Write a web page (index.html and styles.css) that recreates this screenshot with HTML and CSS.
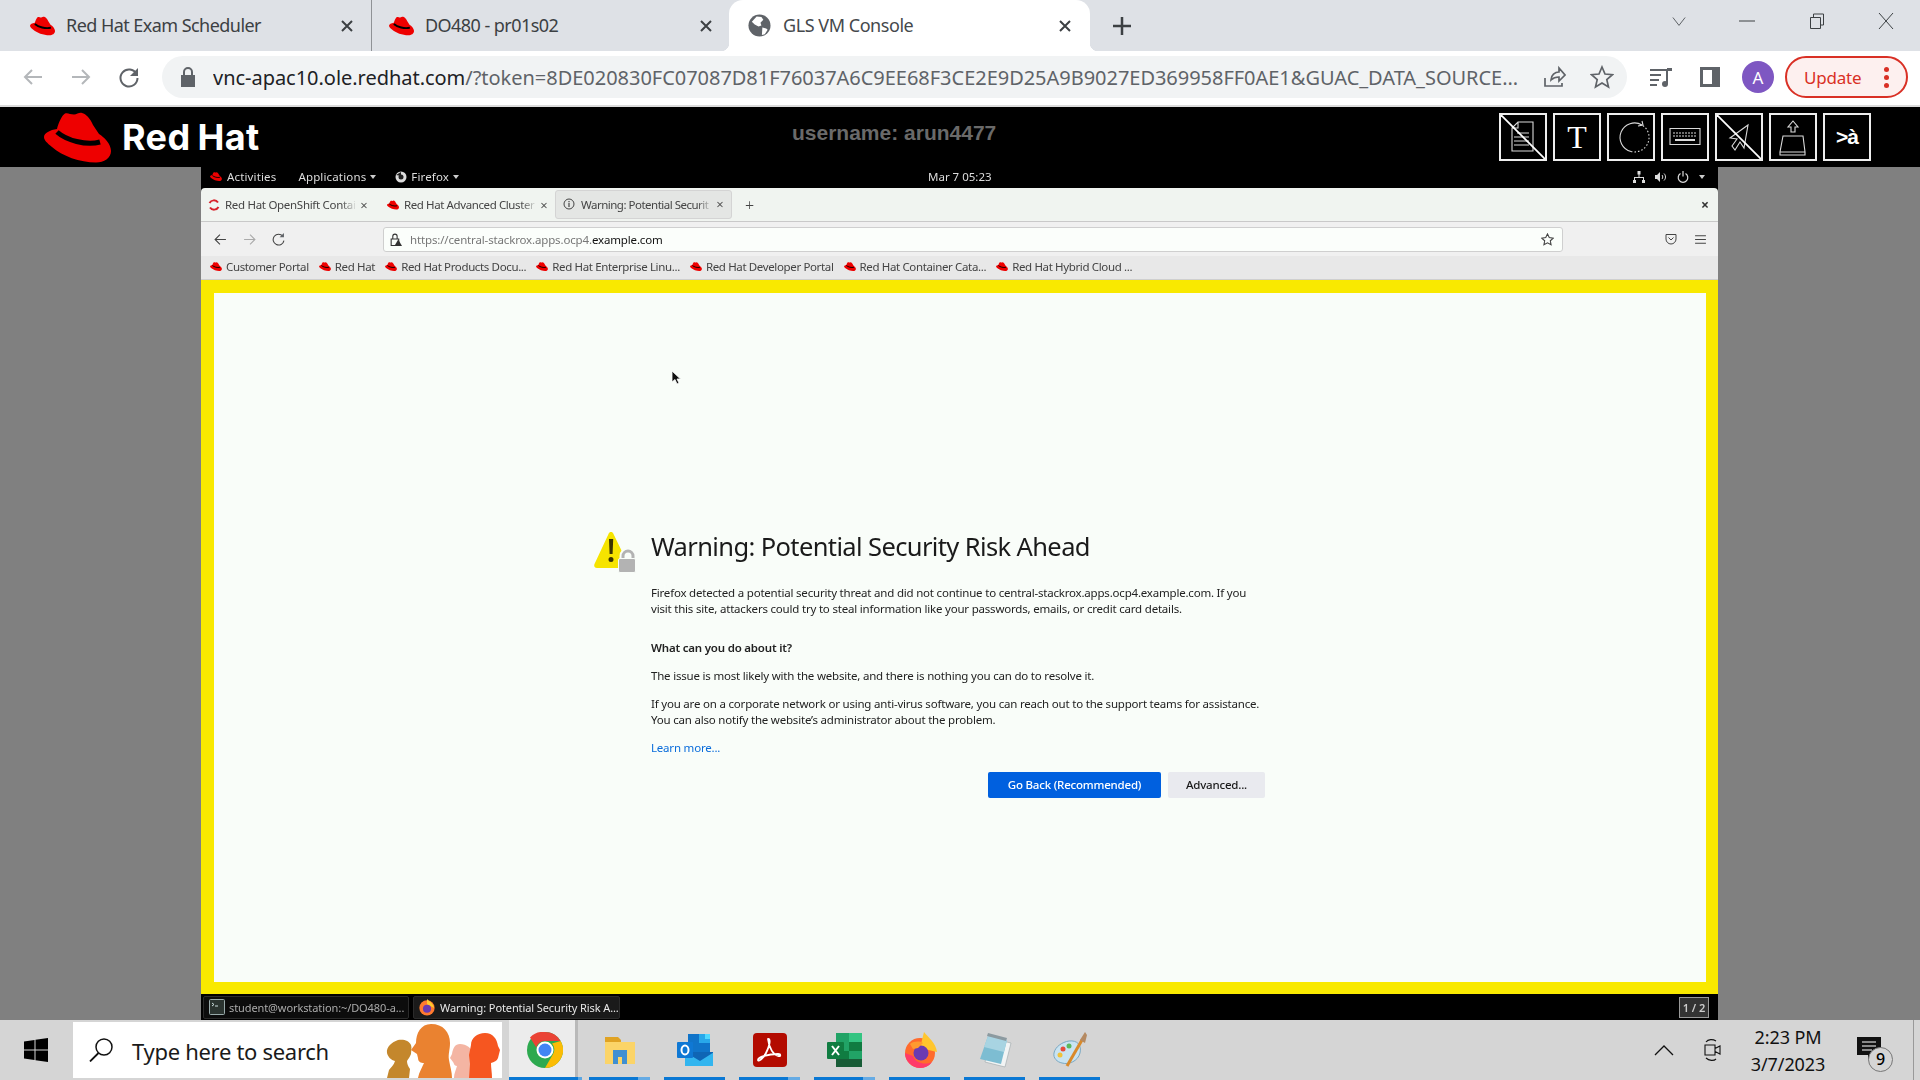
FILE: index.html
```html
<!DOCTYPE html>
<html lang="en">
<head>
<meta charset="utf-8">
<title>GLS VM Console</title>
<link rel="stylesheet" href="styles.css">
</head>
<body>
<svg class="sprite" width="0" height="0" aria-hidden="true">
  <symbol id="hat" viewBox="0 0 67 51">
    <path fill="#ee0000" d="M21 1.5C24 .5 26 2.5 30 2.5 33 2.5 35 .3 38 1 42 2 46 6 49 13L55 22C60 25 67 32 67 39 67 46 60 50.5 52 50.5 36 50.5 18 44 8 35 3 31 0 28 0 25 0 21 6 18 13 17 14 12 18 3 21 1.5Z"/>
    <path fill="none" stroke="#000" stroke-width="5" d="M13 20C22 28 42 34 56 30"/>
  </symbol>
</svg>

<header class="chrome-tabs">
  <div class="ctab ctab-a"><svg class="chat"><use href="#hat"/></svg><span class="ctitle">Red Hat Exam Scheduler</span><svg class="cclose" viewBox="0 0 16 16"><path d="M3 3l10 10M13 3L3 13"/></svg></div>
  <div class="ctab ctab-b"><svg class="chat"><use href="#hat"/></svg><span class="ctitle">DO480 - pr01s02</span><svg class="cclose" viewBox="0 0 16 16"><path d="M3 3l10 10M13 3L3 13"/></svg></div>
  <div class="ctab ctab-c"><svg class="cglobe" viewBox="0 0 24 24"><circle cx="12" cy="12" r="11.5" fill="#5f6368"/><path fill="#fff" d="M9 2.500l5 .5 2 3-3 3 1 3-3 1-4-2-3-3zM15 14l4 1 1.500 1.500-3 4.500-3 1z"/></svg><span class="ctitle">GLS VM Console</span><svg class="cclose" viewBox="0 0 16 16"><path d="M3 3l10 10M13 3L3 13"/></svg></div>
  <svg class="cplus" viewBox="0 0 18 18"><path d="M9 0v18M0 9h18"/></svg>
  <div class="win-controls">
    <svg class="wc wc-down" viewBox="0 0 16 16"><path d="M1 4l7 9 7-9"/></svg>
    <svg class="wc wc-min" viewBox="0 0 16 16"><path d="M0 8h16"/></svg>
    <svg class="wc wc-max" viewBox="0 0 16 16"><path d="M1.500 4.500h10v11h-10zM4.500 4.500V1h10v11h-3"/></svg>
    <svg class="wc wc-x" viewBox="0 0 16 16"><path d="M1 0l14 16M15 0L1 16"/></svg>
  </div>
</header>

<nav class="chrome-bar">
  <svg class="nav nav-off" viewBox="0 0 24 24"><path d="M21 12H4M11 5l-7 7 7 7"/></svg>
  <svg class="nav nav-off" viewBox="0 0 24 24"><path d="M3 12h17M13 5l7 7-7 7"/></svg>
  <svg class="nav" viewBox="0 0 24 24"><path d="M19.500 9A8.500 8.500 0 1 0 20.500 13"/><path class="solid" d="M21 3v8h-8z"/></svg>
  <div class="omnibox">
    <svg class="lock" viewBox="0 0 16 20"><path class="solid" d="M1 8h14v12H1z"/><path d="M4 8V5a4 4 0 0 1 8 0v3"/></svg>
    <div class="url"><b>vnc-apac10.ole.redhat.com</b>/?token=8DE020830FC07087D81F76037A6C9EE68F3CE2E9D25A9B9027ED369958FF0AE1&amp;GUAC_DATA_SOURCE...</div>
    <svg class="nav" viewBox="0 0 24 24"><path d="M3 13v8h17v-3M9 15c0-5 4-8 8-8V3l6 7-6 6v-4c-3 0-6 1-8 3z"/></svg>
    <svg class="nav" viewBox="0 0 24 24"><path d="M12 2l3 7 7.500.700-5.700 4.900 1.700 7.400L12 18l-6.500 4 1.700-7.400L1.500 9.700 9 9z"/></svg>
  </div>
  <svg class="nav nav-media" viewBox="0 0 24 24"><path d="M1 5h16M1 10h11M1 15h9M1 20h7"/><path d="M18 4v15"/><path class="solid" d="M18 3h5v3h-5z"/><circle class="solid" cx="16" cy="19" r="3"/></svg>
  <svg class="nav nav-panel" viewBox="0 0 24 24"><path class="solid" d="M2 2h20v20H2z"/><path class="hole" d="M5 5h9v14H5z"/></svg>
  <div class="avatar">A</div>
  <div class="update"><span>Update</span><i class="dots"></i></div>
</nav>

<section class="rh-header">
  <div class="rh-logo"><svg class="rh-hat"><use href="#hat"/></svg><span class="rh-word">Red Hat</span></div>
  <div class="rh-user">username: arun4477</div>
  <div class="toolbox">
    <div class="tool"><svg viewBox="0 0 48 48"><path d="M19 9h15v29H13V15zM19 9v6h-6M18 20h12M15 24h15M15 28h15M15 32h15"/><path class="w" d="M0 0l48 48"/></svg></div>
    <div class="tool tool-t">T</div>
    <div class="tool"><svg viewBox="0 0 48 48"><path d="M35 12A14.500 14.500 0 1 0 24 38.500"/><path stroke-dasharray="1.500 2" d="M24 38.500A14.500 14.500 0 0 0 35 12"/><path d="M31 13l5-1-1-4"/></svg></div>
    <div class="tool"><svg viewBox="0 0 48 48"><path d="M9 15.500h30v16H9z"/><path stroke-dasharray="2 1" d="M12 20h24M12 23h24"/><path d="M14 27h20" stroke-width="2"/></svg></div>
    <div class="tool"><svg viewBox="0 0 48 48"><path d="M33 12L15 25l7 1-5 7 3 4 5-8 4 6z"/><path class="w" d="M0 0l48 48"/></svg></div>
    <div class="tool"><svg viewBox="0 0 48 48"><path d="M24 8l5 6h-3v5h-4v-5h-3zM14 23h20l2 16H11zM11 39v3h25v-3"/></svg></div>
    <div class="tool tool-a">&gt;à</div>
  </div>
</section>

<main class="vnc-area">
  <div class="desktop">
    <div class="gnome-top">
      <div class="gt-left">
        <span class="gt-item"><svg class="ghat"><use href="#hat"/></svg>Activities</span>
        <span class="gt-item gt-apps">Applications <i class="caret"></i></span>
        <span class="gt-item gt-ff"><svg class="gff" viewBox="0 0 12 12"><circle cx="6" cy="6" r="5.500" fill="#ddd"/><circle cx="6" cy="6" r="2.500" fill="#222"/><path d="M1 4l5-3v4z" fill="#222"/></svg>Firefox <i class="caret"></i></span>
      </div>
      <div class="gt-clock">Mar 7 05:23</div>
      <div class="gt-right">
        <svg class="gi" viewBox="0 0 12 12"><path fill="#ddd" d="M4.500 0h3v3.500h-3zM5.500 3.500h1V6H11v3h1v3H9V9h1V7H2v2h1v3H0V9h1V6h4.500z"/></svg>
        <svg class="gi" viewBox="0 0 12 12"><path fill="#ddd" d="M0 4h2l3-3v10L2 8H0z"/><path fill="none" stroke="#ddd" d="M7 4c1 1 1 3 0 4M9 2.500c2 2 2 5 0 7"/></svg>
        <svg class="gi" viewBox="0 0 12 12"><path fill="none" stroke="#ddd" stroke-width="1.200" d="M3.500 2.500a4.800 4.800 0 1 0 5 0M6 0v5.500"/></svg>
        <i class="caret"></i>
      </div>
    </div>

    <div class="ff-window">
      <div class="ff-tabs">
        <div class="ff-tab ff-tab-a"><svg class="fav" viewBox="0 0 12 12"><path fill="none" stroke="#d8222a" stroke-width="2" d="M10 3.500A5 5 0 0 0 1.500 4M2 8.500A5 5 0 0 0 10.500 8"/></svg><span class="ff-title">Red Hat OpenShift Contai</span><span class="ff-x">×</span></div>
        <div class="ff-tab ff-tab-b"><svg class="fav fav-hat"><use href="#hat"/></svg><span class="ff-title">Red Hat Advanced Cluster</span><span class="ff-x">×</span></div>
        <div class="ff-tab ff-tab-c"><svg class="fav" viewBox="0 0 12 12"><circle cx="6" cy="6" r="5" fill="none" stroke="#444" stroke-width="1"/><path stroke="#444" stroke-width="1.200" d="M6 5v4M6 3v1.200"/></svg><span class="ff-title">Warning: Potential Securit</span><span class="ff-x">×</span></div>
        <span class="ff-plus">+</span>
        <span class="ff-close">×</span>
      </div>
      <div class="ff-nav">
        <svg class="fi" viewBox="0 0 12 12"><path d="M11 6H1M5.500 1.500L1 6l4.500 4.500"/></svg>
        <svg class="fi fi-off" viewBox="0 0 12 12"><path d="M1 6h10M6.500 1.500L11 6l-4.500 4.500"/></svg>
        <svg class="fi" viewBox="0 0 12 12"><path d="M10 3a5 5 0 1 0 1 4"/><path class="solid" d="M11 0v4H7z"/></svg>
        <div class="ff-url">
          <svg class="fu-lock" viewBox="0 0 12 12"><path d="M2 5.500h7v6H2zM3.500 5.500V3a2 2 0 0 1 4 0v2.500"/><path class="solid tri" d="M8.500 6l3.500 6H5z"/></svg>
          <div class="fu-text">https://central-stackrox.apps.ocp4.<b>example.com</b></div>
          <svg class="fi" viewBox="0 0 12 12"><path d="M6 .8l1.600 3.400 3.700.5-2.700 2.500.7 3.700L6 9.100l-3.300 1.800.7-3.700L.7 4.700l3.700-.5z"/></svg>
        </div>
        <svg class="fi fi-pocket" viewBox="0 0 12 12"><path d="M1 1.500h10V6a5 5 0 0 1-10 0zM3.500 4.500L6 7l2.500-2.500"/></svg>
        <svg class="fi fi-menu" viewBox="0 0 12 12"><path d="M1 2.500h10M1 6h10M1 9.500h10"/></svg>
      </div>
      <div class="ff-marks">
        <span class="mark"><svg class="mhat"><use href="#hat"/></svg>Customer Portal</span>
        <span class="mark"><svg class="mhat"><use href="#hat"/></svg>Red Hat</span>
        <span class="mark"><svg class="mhat"><use href="#hat"/></svg>Red Hat Products Docu...</span>
        <span class="mark"><svg class="mhat"><use href="#hat"/></svg>Red Hat Enterprise Linu...</span>
        <span class="mark"><svg class="mhat"><use href="#hat"/></svg>Red Hat Developer Portal</span>
        <span class="mark"><svg class="mhat"><use href="#hat"/></svg>Red Hat Container Cata...</span>
        <span class="mark"><svg class="mhat"><use href="#hat"/></svg>Red Hat Hybrid Cloud ...</span>
      </div>
      <div class="frame">
        <div class="page">
          <svg class="cursor" viewBox="0 0 10 16"><path fill="#111" stroke="#fff" stroke-width=".8" d="M1 1v11l3-2.500 2 4.500 2-1-2-4h3.500z"/></svg>
          <article class="warn">
            <svg class="warn-icon" viewBox="0 0 44 43">
              <path fill="#f6e400" d="M17 0c1 0 2 .5 2.500 2L34 32c.8 2 0 4-2.500 4H3c-2.500 0-3.300-2-2.500-4L14.500 2C15 .5 16 0 17 0z"/>
              <path fill="#3a3200" d="M15 7h4.200l-.6 15h-3zM17 25a2.500 2.500 0 1 1 0 5 2.500 2.500 0 0 1 0-5z"/>
              <path fill="none" stroke="#f9fdf9" stroke-width="7" d="M29 27v-3a5 5 0 0 1 10 0v3"/>
              <path fill="none" stroke="#b3b3b3" stroke-width="3" d="M29 27v-3a5 5 0 0 1 10 0v3"/>
              <rect x="24.500" y="26.500" width="17" height="14" rx="1.500" fill="#b3b3b3" stroke="#f9fdf9" stroke-width="1"/>
            </svg>
            <div class="warn-body">
              <h1>Warning: Potential Security Risk Ahead</h1>
              <p class="p-first">Firefox detected a potential security threat and did not continue to central-stackrox.apps.ocp4.example.com. If you<br>visit this site, attackers could try to steal information like your passwords, emails, or credit card details.</p>
              <h2>What can you do about it?</h2>
              <p>The issue is most likely with the website, and there is nothing you can do to resolve it.</p>
              <p>If you are on a corporate network or using anti-virus software, you can reach out to the support teams for assistance.<br>You can also notify the website’s administrator about the problem.</p>
              <p class="learn">Learn more...</p>
              <div class="warn-actions"><span class="btn btn-primary">Go Back (Recommended)</span><span class="btn">Advanced...</span></div>
            </div>
          </article>
        </div>
      </div>
    </div>

    <div class="gnome-bottom">
      <div class="wl"><svg class="wl-term" viewBox="0 0 16 16"><rect x=".5" y=".5" width="15" height="15" rx="1" fill="#2b3430" stroke="#9aa"/><path d="M3 4l2 1.500L3 7M6 7h3" stroke="#cdd" fill="none"/></svg><span>student@workstation:~/DO480-a...</span></div>
      <div class="wl wl-active"><svg class="wl-ff" viewBox="0 0 20 20"><circle cx="10" cy="11" r="8.500" fill="#ff7a2f"/><path d="M10 1c3 3 7 5 8 10L10 7z" fill="#ffcb2d"/><circle cx="10" cy="12" r="4.500" fill="#6a3ab2"/></svg><span>Warning: Potential Security Risk A...</span></div>
      <div class="pager">1 / 2</div>
    </div>
  </div>
</main>

<footer class="taskbar">
  <div class="start"><svg viewBox="0 0 24 24"><path fill="#000" d="M0 3.500l10.500-1.500v9.500H0zM11.500 1.800L24 0v11.500H11.500zM0 12.500h10.500V22L0 20.500zM11.500 12.500H24V24l-12.500-1.800z"/></svg></div>
  <div class="search">
    <svg class="s-mag" viewBox="0 0 24 24"><circle cx="15" cy="9" r="8" fill="none" stroke="#111" stroke-width="1.500"/><path d="M9.500 15L1 23.500" stroke="#111" stroke-width="1.800"/></svg>
    <span class="s-text">Type here to search</span>
    <svg class="s-art" viewBox="386 1022 116 56">
      <path fill="#c4872c" d="M398 1040c5-1 11 0 13 5 1 3 0 6 0 9-1 3-3 5-4 7 0 3 1 5 3 8l-1 9h-22l2-8c2-3 5-5 6-9-4-1-7-4-8-8-1-6 5-11 11-13z"/>
      <path fill="#f4b5a3" d="M460 1044c6 0 13 4 13 12v22h-19c0-5 2-8 3-12-3 0-3-3-4-4l-3-4 2-4c1-6 3-10 8-10z"/>
      <path fill="#ea8230" d="M431 1024c12 0 19 8 19 19 0 7-2 11-1 17 1 6 3 12 3 18h-34c1-6 4-10 6-15-3 0-6-1-6-5l-1-4-3-2-3-2 5-7c0-10 5-19 15-19z"/>
      <path fill="#f65620" d="M485 1033c8 0 12 6 13 13l2 4-2 8c-1 3-4 4-7 5 0 5 1 10 1 15h-23l1-14-1-9 2-10c0-7 6-12 14-12z"/>
    </svg>
  </div>
  <div class="tiles">
    <div class="tile tile-active"><svg class="app" viewBox="0 0 36 36"><circle cx="18" cy="18" r="18" fill="#2da94f"/><path fill="#ea4335" d="M18 0a18 18 0 0 1 15.600 9H18a9 9 0 0 0-8.700 6.500L3 5.500A18 18 0 0 1 18 0z"/><path fill="#fbbc05" d="M33.600 9A18 18 0 0 1 18 36l7.800-13.500A9 9 0 0 0 25 11.500z"/><circle cx="18" cy="18" r="8.500" fill="#fff"/><circle cx="18" cy="18" r="6.500" fill="#4285f4"/></svg><i class="bar"></i></div>
    <div class="tile tile-multi"><svg class="app" viewBox="0 0 36 36"><path fill="#e0a324" d="M3 5h13l3 3v4H3z"/><path fill="#fbd468" d="M3 10h30v22H3z"/><path fill="#3f8fd2" d="M11 18h14v14h-5v-7h-4v7h-5z"/></svg><i class="bar"></i></div>
    <div class="tile"><svg class="app" viewBox="0 0 36 36"><path fill="#1074c9" d="M11 2h22v18H11z"/><path fill="#28a8ea" d="M22 2h11v9H22z"/><path fill="#50d9ff" d="M28 2h5v5h-5z"/><path fill="#0f65b5" d="M8 20h29v14H8z"/><path fill="#32b5ef" d="M8 20l15 9 14-9v14H8z"/><rect x="0" y="10" width="16" height="16" rx="1" fill="#0f78d4"/><ellipse cx="8" cy="18" rx="3.500" ry="4.500" fill="none" stroke="#fff" stroke-width="2"/></svg><i class="bar"></i></div>
    <div class="tile tile-multi"><svg class="app" viewBox="0 0 36 36"><rect x="1" y="1" width="34" height="34" rx="4" fill="#b30b00"/><path fill="none" stroke="#fff" stroke-width="1.800" d="M16 7c2-1 3 4-2 14-3 6-8 9-8 7 0-3 10-6 20-6 3 0 3 3 0 2-4-1-9-7-10-17z"/></svg><i class="bar"></i></div>
    <div class="tile tile-multi"><svg class="app" viewBox="0 0 36 36"><path fill="#21a366" d="M9 1h26v34H9z"/><path fill="#33c481" d="M22 1h13v9H22z"/><path fill="#107c41" d="M22 10h13v9H22zM9 19h13v8H9z"/><path fill="#185c37" d="M9 27h26v8H9z"/><rect x="0" y="10" width="17" height="17" rx="1" fill="#107c41"/><path stroke="#fff" stroke-width="2" d="M5 14l7 9M12 14l-7 9"/></svg><i class="bar"></i></div>
    <div class="tile"><svg class="app" viewBox="0 0 36 36"><circle cx="18" cy="21" r="15" fill="#ff6b2d"/><path fill="#ffc62e" d="M22 0c4 5 12 11 13 20L18 16z"/><path fill="#ff3a6a" d="M3 21c0 8 7 15 15 15 5 0 9-2 12-6-6 3-16 2-19-6z"/><circle cx="19" cy="21" r="7.500" fill="#6a3ab2"/><path fill="#ff9a2f" d="M8 12c4-3 10-3 13-1l-5 5-5 1z"/></svg><i class="bar"></i></div>
    <div class="tile"><svg class="app" viewBox="0 0 36 36"><path fill="#f2f4f4" stroke="#9aa5a8" stroke-width=".6" d="M13 6l21 5-6 24-20-5z"/><path fill="#7dbdd2" d="M11 4l19 4-6 24L3 27z"/><path fill="#a8d4e2" d="M11 4l19 4-3 12L7 15z"/><path fill="#8c9aa0" d="M11 1l19 5-1 3-19-5z"/></svg><i class="bar"></i></div>
    <div class="tile"><svg class="app" viewBox="0 0 36 36"><path fill="#c9e3f1" stroke="#7aa8c2" stroke-width="1" d="M17 9c8-1 13 4 11 12-2 8-11 12-18 10-5-1-9-5-8-10 1-6 8-11 15-12z"/><circle cx="11" cy="17" r="2.500" fill="#e64b3c"/><circle cx="17" cy="14" r="2.500" fill="#5bb85c"/><circle cx="8" cy="23" r="2.500" fill="#f0c23b"/><path stroke="#d98a2b" stroke-width="3" d="M15 34L30 8"/><path fill="#b58a62" d="M28 8l5-8 2 3-2 8z"/></svg><i class="bar"></i></div>
  </div>
  <div class="tray">
    <svg class="tr-up" viewBox="0 0 20 12"><path d="M1 11l9-9 9 9"/></svg>
    <svg class="tr-cam" viewBox="0 0 18 24"><path d="M1 7h10v10H1zM11 10.500l5-2.500v8l-5-2.500zM2 4C4 1 9 1 12 3M2 20c3 3 8 3 10 1"/></svg>
    <div class="tr-time"><span>2:23 PM</span><span>3/7/2023</span></div>
    <div class="tr-note"><svg viewBox="0 0 24 24"><path fill="#111" d="M0 0h24v18h-9l-4 5v-5H0z"/><path stroke="#fff" d="M5 5h14M5 9h14M5 13h10"/></svg><span class="tr-badge">9</span></div>
    <div class="tr-show"></div>
  </div>
</footer>
</body>
</html>
```

FILE: styles.css
```css
* { box-sizing: border-box; }
html, body { margin: 0; padding: 0; }
body {
  width: 1920px;
  height: 1080px;
  overflow: hidden;
  display: flex;
  flex-direction: column;
  font-family: "Noto Sans", "Liberation Sans", sans-serif;
  background: #808080;
}
.sprite { position: absolute; }

/* Chrome tab strip */
.chrome-tabs {
  height: 51px;
  flex: none;
  display: flex;
  background: #dee1e6;
  color: #3c4043;
}
.ctab {
  display: flex;
  align-items: center;
  height: 51px;
  position: relative;
}
.ctab-a { width: 372px; padding: 0 16px 0 30px; border-right: 1px solid #8f9296; background-clip: padding-box; }
.ctab-b { width: 357px; padding: 0 15px 0 17px; }
.ctab-c {
  width: 361px;
  padding: 0 17px 0 19px;
  background: #fff;
  border-radius: 14px 14px 0 0;
  color: #45494c;
}
.ctab-c::before, .ctab-c::after {
  content: "";
  position: absolute;
  bottom: 0;
  width: 8px;
  height: 8px;
}
.ctab-c::before { left: -8px; background: radial-gradient(circle at 0 0, transparent 8px, #fff 8.500px); }
.ctab-c::after { right: -8px; background: radial-gradient(circle at 100% 0, transparent 8px, #fff 8.500px); }
.chat { width: 25px; height: 20px; flex: none; }
.cglobe { width: 23px; height: 23px; flex: none; }
.ctitle { flex: 1; margin: 0 0 1px 11px; font-size: 18px; letter-spacing: -.55px; white-space: nowrap; }
.ctab-c .ctitle { margin-left: 12px; letter-spacing: -.45px; }
.cclose { width: 16px; height: 16px; flex: none; fill: none; stroke: #3c4043; stroke-width: 2; }
.cplus { width: 18px; height: 18px; margin: 17px 0 0 23px; flex: none; fill: none; stroke: #3c4043; stroke-width: 2.500; }
.win-controls { margin-left: auto; display: flex; align-items: center; height: 42px; padding-right: 26px; gap: 0; }
.wc { fill: none; stroke: #3c4043; stroke-width: 1; width: 16px; height: 16px; flex: none; }
.wc-down { margin-right: 53px; stroke-width: .9; width: 14px; height: 14px; }
.wc-min { margin-right: 54px; }
.wc-max { margin-right: 53px; }

/* Chrome toolbar */
.chrome-bar {
  height: 56px;
  flex: none;
  display: flex;
  align-items: center;
  padding: 0 12px 2px 21px;
  background: #fff;
  border-bottom: 2px solid #dcdcdc;
  gap: 24px;
  color: #5f6368;
}
.nav { width: 24px; height: 24px; flex: none; fill: none; stroke: #5f6368; stroke-width: 2; }
.nav-off { stroke: #b4b7ba; }
.solid { fill: #5f6368; stroke: none; }
.hole { fill: #fff; stroke: none; }
.omnibox {
  width: 1465px;
  height: 42px;
  flex: none;
  margin-left: -3px;
  border-radius: 21px;
  background: #f1f3f4;
  display: flex;
  align-items: center;
  padding: 0 13px 0 18px;
  gap: 24px;
}
.omnibox .nav { stroke-width: 1.700; }
.lock { width: 16px; height: 20px; flex: none; fill: none; stroke: #5f6368; stroke-width: 2; margin-right: -7px; }
.url { flex: 1; min-width: 0; font-size: 20px; letter-spacing: -.03px; white-space: nowrap; overflow: hidden; color: #5f6368; padding-top: 1px; }
.url b { font-weight: 400; color: #202124; }
.nav-media { margin-left: -2px; }
.nav-panel { margin-left: 1px; }
.avatar {
  width: 32px; height: 32px; flex: none;
  border-radius: 50%;
  background: #7e57c2;
  color: #fff;
  font-size: 17px;
  display: flex; align-items: center; justify-content: center;
  margin-left: -4px; margin-right: -13px;
}
.update {
  width: 123px; height: 42px; flex: none;
  border: 2px solid #d93025;
  border-radius: 21px;
  background: #fdf0ef;
  color: #d93025;
  font-size: 17px;
  display: flex; align-items: center;
  padding-left: 17px;
  position: relative;
  letter-spacing: -.2px;
}
.dots { width: 5px; height: 5px; border-radius: 50%; background: #d93025; box-shadow: 0 -8px 0 #d93025, 0 8px 0 #d93025; margin-left: 23px; }

/* Red Hat header */
.rh-header {
  height: 60px;
  flex: none;
  background: #000;
  display: flex;
  align-items: flex-start;
  padding-left: 44px;
}
.rh-logo { display: flex; align-items: center; height: 56px; margin-top: 2px; gap: 11px; width: 215px; }
.rh-hat { width: 67px; height: 51px; flex: none; }
.rh-word { color: #fff; font-family: Inter, "Liberation Sans", sans-serif; font-weight: 700; font-size: 36px; letter-spacing: .4px; word-spacing: -2px; white-space: nowrap; }
.rh-user { color: #6a6a6a; font-family: "Liberation Sans", sans-serif; font-weight: 700; font-size: 21px; margin: 14px 0 0 533px; white-space: nowrap; width: 240px; }
.toolbox { margin: 6px 0 0 auto; padding-right: 49px; display: flex; gap: 6px; }
.tool {
  width: 48px; height: 48px;
  border: 2px solid #eee;
  color: #fff;
  display: flex; align-items: center; justify-content: center;
  overflow: hidden;
}
.tool svg { width: 48px; height: 48px; flex: none; fill: none; stroke: #dadada; stroke-width: 1.100; }
.tool svg .w { stroke: #fff; stroke-width: 1.800; }
.tool-t { font-family: "Liberation Serif", serif; font-size: 32px; }
.tool-a { font-family: "Liberation Sans", sans-serif; font-weight: 700; font-size: 21px; letter-spacing: -1px; }

/* VNC */
.vnc-area { flex: 1; min-height: 0; display: flex; padding-left: 201px; background: #808080; }
.desktop {
  width: 1517px; height: 853px;
  background: #000;
  display: flex; flex-direction: column;
  filter: blur(.35px);
}
.gnome-top {
  height: 21px; flex: none;
  display: flex; align-items: center; justify-content: space-between;
  color: #dcdcdc;
  font-size: 11.500px;
  letter-spacing: .15px;
  position: relative;
  padding: 0 13px 2px 9px;
}
.gt-left { display: flex; align-items: center; gap: 22px; }
.gt-item { display: flex; align-items: center; gap: 4px; white-space: nowrap; }
.gt-ff { margin-left: -3px; }
.ghat { width: 12px; height: 9px; margin-right: 1px; }
.gff { width: 12px; height: 12px; }
.caret { width: 0; height: 0; border: 3.500px solid transparent; border-top: 4px solid #ccc; border-bottom: 0; display: inline-block; flex: none; }
.gt-clock { position: absolute; left: 727px; top: 2px; letter-spacing: 0; }
.gt-right { display: flex; align-items: center; gap: 10px; }
.gi { width: 12px; height: 12px; flex: none; }

.ff-window { flex: 1; min-height: 0; display: flex; flex-direction: column; border-radius: 4px 4px 0 0; overflow: hidden; }
.ff-tabs {
  height: 34px; flex: none;
  background: #f0f4f0;
  border-bottom: 1px solid #c9c9c9;
  display: flex; align-items: center;
  padding-left: 6px;
  font-size: 11.500px; color: #444;
}
.ff-tab { display: flex; align-items: center; height: 29px; padding: 0 5px 0 0; position: relative; }
.ff-tab-a { width: 168px; padding-left: 1px; }
.ff-tab-b { width: 180px; padding-left: 12px; }
.ff-tab-c { width: 177px; padding-left: 7px; background: #e4e6e4; border: 1px solid #d4d4d4; border-radius: 3px; margin-top: -1px; }
.fav { width: 12px; height: 12px; flex: none; }
.fav-hat { height: 10px; }
.ff-title {
  flex: 1; min-width: 0; margin-left: 5px;
  white-space: nowrap;
  letter-spacing: -.3px;
  -webkit-mask-image: linear-gradient(90deg, #000 88%, transparent);
  mask-image: linear-gradient(90deg, #000 88%, transparent);
}
.ff-tab-b .ff-title { letter-spacing: -.4px; }
.ff-tab-c .ff-title { margin-left: 6px; letter-spacing: -.5px; }
.ff-x { width: 12px; flex: none; font-size: 13px; text-align: center; color: #555; margin-left: 1px; }
.ff-plus { margin-left: 13px; font-size: 16px; color: #444; font-weight: 300; }
.ff-close { margin-left: auto; margin-right: 9px; font-size: 14px; font-weight: 700; color: #333; }
.ff-nav {
  height: 34px; flex: none;
  background: #f0f0f0;
  display: flex; align-items: center;
  padding: 0 9px 0 13px;
  gap: 16px;
}
.fi { width: 13px; height: 13px; flex: none; fill: none; stroke: #444; stroke-width: 1; }
.fi-off { stroke: #aaa; }
.ff-url {
  width: 1180px; height: 25px;
  flex: none;
  margin-left: 82px;
  background: #fbfefb;
  border: 1px solid #cfcfcf;
  border-radius: 3px;
  display: flex; align-items: center;
  padding: 0 3px 0 5px;
  color: #777;
  font-size: 11.500px;
}
.fu-lock { width: 13px; height: 13px; flex: none; fill: none; stroke: #333; stroke-width: 1; }
.tri { fill: #333; }
.fu-text { flex: 1; margin-left: 8px; letter-spacing: -.15px; }
.fu-text b { font-weight: 400; color: #111; }
.ff-url .fi { margin-right: 5px; }
.ff-nav .fi-pocket { margin-left: 86px; width: 12px; height: 12px; }
.ff-nav .fi-menu { margin-left: 1px; }
.ff-marks {
  height: 24px; flex: none;
  background: #e8e8e8;
  border-bottom: 1px solid #cfcfcf;
  display: flex; align-items: center;
  padding: 0 0 2px 9px;
  gap: 10px;
  font-size: 11.500px; color: #444;
  letter-spacing: -.36px;
}
.mark { display: flex; align-items: center; gap: 4px; white-space: nowrap; }
.mhat { width: 12px; height: 9px; flex: none; }
.frame { flex: 1; min-height: 0; border: solid #f9e900; border-width: 13px 12px 12px 13px; background: #f9fdf9; }
.page { height: 100%; position: relative; padding: 237px 0 0 380px; }
.cursor { position: absolute; left: 457px; top: 77px; width: 10px; height: 16px; }
.warn { display: flex; }
.warn-icon { width: 44px; height: 43px; flex: none; margin: 2px 13px 0 0; }
.warn-body { width: 613px; color: #222; font-size: 11.500px; line-height: 15.700px; }
.warn-body h1 { margin: 0 0 23px; font-size: 25.500px; line-height: 32px; font-weight: 400; color: #1a1a1a; letter-spacing: -.62px; white-space: nowrap; }
.warn-body h2 { margin: 24px 0 12px; font-size: 11.500px; line-height: 16px; font-weight: 600; letter-spacing: -.2px; }
.warn-body p { margin: 0 0 12px; letter-spacing: -.2px; white-space: nowrap; }
.warn-body .learn { color: #0a6cdb; margin-bottom: 17px; }
.warn-actions { display: flex; justify-content: flex-end; gap: 7px; }
.btn {
  height: 26px; padding: 0 15px;
  display: flex; align-items: center; justify-content: center;
  font-size: 11.500px; font-weight: 500;
  background: #e9eaef;
  border-radius: 2px;
  color: #1a1a1a;
  letter-spacing: -.2px;
}
.btn-primary { background: #0060df; color: #fff; width: 173px; }
.btn:last-child { width: 97px; margin-right: -1px; }

.gnome-bottom {
  height: 26px; flex: none;
  background: #000;
  display: flex; align-items: center;
  padding: 0 9px 0 2px;
  gap: 4px;
  color: #aaa;
  font-size: 11px;
}
.wl {
  width: 206px; height: 23px;
  border: 1px solid #2a2a2a;
  border-radius: 2px;
  background: #0c0c0c;
  display: flex; align-items: center;
  padding-left: 5px;
  gap: 4px;
  white-space: nowrap;
  letter-spacing: -.1px;
}
.wl-term { width: 16px; height: 16px; flex: none; }
.wl-ff { width: 18px; height: 18px; flex: none; margin-left: -1px; }
.wl-active { width: 207px; color: #e8e8e8; background: #1a1a1a; }
.pager {
  margin-left: auto;
  width: 30px; height: 21px;
  border: 1px solid #999;
  background: #333;
  color: #ccc;
  font-size: 11px;
  display: flex; align-items: center; justify-content: center;
  font-weight: 600;
}

/* Taskbar */
.taskbar {
  height: 60px; flex: none;
  background: #d5d5d5;
  display: flex;
  align-items: stretch;
}
.start { width: 73px; flex: none; display: flex; align-items: center; justify-content: center; padding-right: 2px; }
.start svg { width: 24px; height: 24px; }
.search {
  width: 429px; height: 56px; flex: none;
  margin-top: 2px;
  background: #fff;
  display: flex; align-items: center;
  padding-left: 16px;
  position: relative;
  overflow: hidden;
}
.s-mag { width: 24px; height: 24px; flex: none; }
.s-text { margin: 2px 0 0 19px; font-size: 22px; letter-spacing: -.3px; color: #1a1a1a; white-space: nowrap; }
.s-art { position: absolute; right: 0; top: 0; width: 116px; height: 56px; }
.tiles { display: flex; margin-left: 5px; }
.tile { width: 75px; flex: none; display: flex; flex-direction: column; align-items: center; position: relative; padding-top: 12px; }
.tile-active { background: linear-gradient(90deg, #d5d5d5 2px, #ececec 2px, #ececec 68px, #b9b9b9 68px, #b9b9b9 71px, #d5d5d5 71px); }
.app { width: 36px; height: 36px; flex: none; }
.bar { position: absolute; left: 7px; right: 7px; bottom: 0; height: 3px; background: #0a78d4; }
.tile-active .bar { left: 2px; right: 0; background: linear-gradient(90deg, #0a78d4 94%, #5aa5e2 94%); }
.tile-multi .bar { background: linear-gradient(90deg, #0a78d4 80%, #66abe4 80%); }
.tray { margin-left: auto; display: flex; align-items: center; position: relative; }
.tr-up { width: 20px; height: 12px; flex: none; fill: none; stroke: #111; stroke-width: 1.300; margin-right: 30px; }
.tr-cam { width: 18px; height: 24px; flex: none; fill: none; stroke: #111; stroke-width: 1.100; margin-right: 26px; }
.tr-time { width: 80px; display: flex; flex-direction: column; align-items: center; font-size: 18px; line-height: 27px; color: #111; padding-top: 1px; letter-spacing: -.1px; }
.tr-note { width: 27px; height: 27px; position: relative; margin: 0 0 2px 29px; }
.tr-note svg { width: 24px; height: 24px; position: absolute; left: 0; top: 1px; }
.tr-badge {
  position: absolute; left: 11px; top: 11px;
  width: 25px; height: 25px;
  border: 1px solid #777;
  border-radius: 50%;
  background: #d5d5d5;
  font-size: 16px;
  display: flex; align-items: center; justify-content: center;
  font-weight: 500;
}
.tr-show { width: 1px; height: 60px; background: #999; margin-left: 29px; margin-right: 6px; }
```
